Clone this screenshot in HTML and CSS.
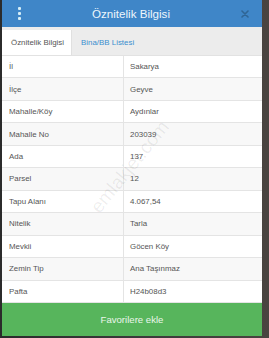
FILE: index.html
```html
<!DOCTYPE html>
<html lang="tr">
<head>
<meta charset="utf-8">
<title>Öznitelik Bilgisi</title>
<link rel="stylesheet" href="styles.css">
</head>
<body>
<div class="modal">
  <header class="head">
    <span class="kebab"><i></i><i></i><i></i></span>
    <h1 class="title">Öznitelik Bilgisi</h1>
    <span class="close">
      <svg width="8" height="8" viewBox="0 0 8 8"><path d="M1 1L7 7M7 1L1 7" stroke="currentColor" stroke-width="1.6" stroke-linecap="round"/></svg>
    </span>
  </header>
  <nav class="tabs">
    <span class="tab active">Öznitelik Bilgisi</span>
    <span class="tab">Bina/BB Listesi</span>
  </nav>
  <div class="table">
    <div class="row"><span class="k">İl</span><span class="v">Sakarya</span></div>
    <div class="row alt"><span class="k">İlçe</span><span class="v">Geyve</span></div>
    <div class="row"><span class="k">Mahalle/Köy</span><span class="v">Aydınlar</span></div>
    <div class="row alt"><span class="k">Mahalle No</span><span class="v">203039</span></div>
    <div class="row"><span class="k">Ada</span><span class="v">137</span></div>
    <div class="row alt"><span class="k">Parsel</span><span class="v">12</span></div>
    <div class="row"><span class="k">Tapu Alanı</span><span class="v">4.067,54</span></div>
    <div class="row alt"><span class="k">Nitelik</span><span class="v">Tarla</span></div>
    <div class="row"><span class="k">Mevkii</span><span class="v">Göcen Köy</span></div>
    <div class="row alt"><span class="k">Zemin Tip</span><span class="v">Ana Taşınmaz</span></div>
    <div class="row"><span class="k">Pafta</span><span class="v">H24b08d3</span></div>
    <span class="watermark">emlakjet.com</span>
  </div>
  <button class="fav">Favorilere ekle</button>
</div>
</body>
</html>
```
FILE: styles.css
```css
html, body {
  margin: 0;
  padding: 0;
}
body {
  width: 269px;
  height: 338px;
  overflow: hidden;
  background: linear-gradient(90deg, #2b2b2b 0, #3a3a3a 50%, #4a4440 100%);
  font-family: "Liberation Sans", Arial, sans-serif;
}
.modal {
  margin-left: 2px;
  width: 260px;
  height: 336px;
  display: flex;
  flex-direction: column;
  background: #fff;
}
.head {
  height: 27px;
  background: #3f86c8;
  display: flex;
  align-items: center;
  position: relative;
  flex: none;
}
.kebab {
  width: 32px;
  display: flex;
  flex-direction: column;
  align-items: center;
  gap: 2.2px;
  padding-left: 1px;
}
.kebab i {
  display: block;
  width: 3px;
  height: 3px;
  border-radius: 1px;
  background: #d6eef7;
}
.title {
  flex: 1;
  margin: 0;
  text-align: center;
  font-weight: normal;
  font-size: 11.6px;
  color: #eef6fc;
  padding-right: 2px;
}
.close {
  width: 32px;
  display: flex;
  justify-content: center;
  color: #2f6596;
  padding-right: 1px;
}
.close svg { display: block; }
.tabs {
  height: 29px;
  background: #ececec;
  display: flex;
  align-items: stretch;
  flex: none;
  border-bottom: 1px solid #e2e2e2;
  box-sizing: border-box;
}
.tab {
  display: flex;
  align-items: center;
  padding: 0 7px 0 9px;
  font-size: 7.9px;
  color: #3b8fcf;
  margin-top: 3px;
}
.tab.active {
  background: #fff;
  color: #555;
  border-right: 1px solid #e0e0e0;
  padding: 0 7px 0 9px;
}
.table {
  height: 247px;
  display: grid;
  grid-template-rows: repeat(11, 1fr);
  position: relative;
  overflow: hidden;
  flex: none;
}
.row {
  display: grid;
  grid-template-columns: 122px 1fr;
  border-bottom: 1px solid #e4e4e4;
  font-size: 7.9px;
  color: #555;
}
.row.alt { background: #f8f8f8; }
.row:last-child { border-bottom: none; }
.k, .v {
  display: flex;
  align-items: center;
  padding-left: 7px;
}
.k { border-right: 1px solid #e4e4e4; }
.v { padding-left: 6px; }
.watermark {
  position: absolute;
  left: 72px;
  top: 100px;
  font-size: 19px;
  color: rgba(0, 0, 0, 0.07);
  transform: rotate(-51deg);
  transform-origin: center;
  pointer-events: none;
  white-space: nowrap;
}
.fav {
  flex: 1;
  border: none;
  margin: 0;
  background: #57b55c;
  color: #eaf6ea;
  font-family: "Liberation Sans", Arial, sans-serif;
  font-size: 9.6px;
  padding: 0 0 1px;
}
```
